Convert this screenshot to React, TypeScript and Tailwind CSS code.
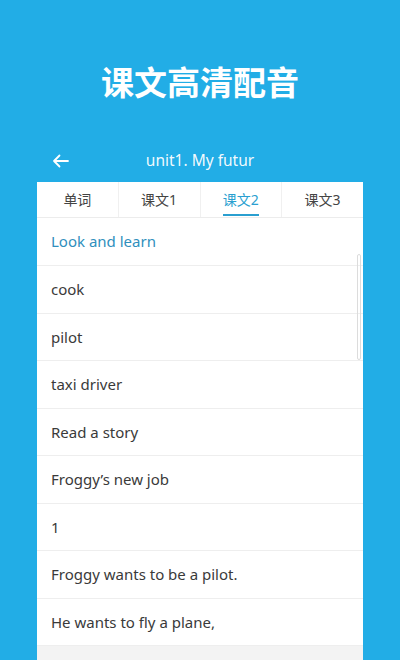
const tabs = ["单词", "课文1", "课文2", "课文3"];
const rows = [
  "cook",
  "pilot",
  "taxi driver",
  "Read a story",
  "Froggy’s new job",
  "1",
  "Froggy wants to be a pilot.",
  "He wants to fly a plane,",
];

export default function App() {
  const active = 2;

  return (
    <div
      className="flex h-[660px] w-[400px] flex-col overflow-hidden bg-[#22ade6]"
      style={{ fontFamily: '"Noto Sans", "Noto Sans CJK SC", sans-serif' }}
    >
      <div className="flex h-[140px] justify-center pt-[58px]">
        <h1 className="h-[50px] text-[33px] font-bold leading-[50px] text-white">课文高清配音</h1>
      </div>

      <div className="relative flex h-[42px] items-center justify-center">
        <svg
          className="absolute left-[52px] top-[14px]"
          width="17"
          height="14"
          viewBox="0 0 17 14"
          fill="none"
          stroke="white"
          strokeWidth="1.8"
          strokeLinecap="round"
          strokeLinejoin="round"
        >
          <path d="M16 7H2M7.5 1.5L2 7l5.5 5.5" />
        </svg>
        <span className="text-[15.5px] text-white/95">unit1. My futur</span>
      </div>

      <div className="relative mx-[37px] flex flex-1 flex-col bg-white">
        <div className="flex h-[36px] border-b border-[#ececec]">
          {tabs.map((t, i) => (
            <div
              key={t}
              className={`relative flex flex-1 items-center justify-center text-[14px] ${
                i > 0 ? "border-l border-[#f0f0f0]" : ""
              } ${i === active ? "text-[#2a9fd0]" : "text-[#444]"}`}
            >
              {t}
              {i === active && (
                <span className="absolute bottom-[1px] left-1/2 h-[2px] w-[36px] -translate-x-1/2 bg-[#2a9fd0]" />
              )}
            </div>
          ))}
        </div>

        <div className="flex h-[48px] items-center border-b border-[#eeeeee] px-[14px] text-[15px] text-[#2f8fbd]">
          Look and learn
        </div>
        {rows.map((r) => (
          <div
            key={r}
            className="flex h-[47.5px] items-center border-b border-[#eeeeee] px-[14px] text-[15px] text-[#3a3a3a]"
          >
            {r}
          </div>
        ))}
        <div className="flex-1 bg-[#f3f3f3]" />

        <div className="absolute right-[2px] top-[72px] h-[106px] w-[4px] rounded-[3px] border border-[#dcdcdc]" />
      </div>
    </div>
  );
}
